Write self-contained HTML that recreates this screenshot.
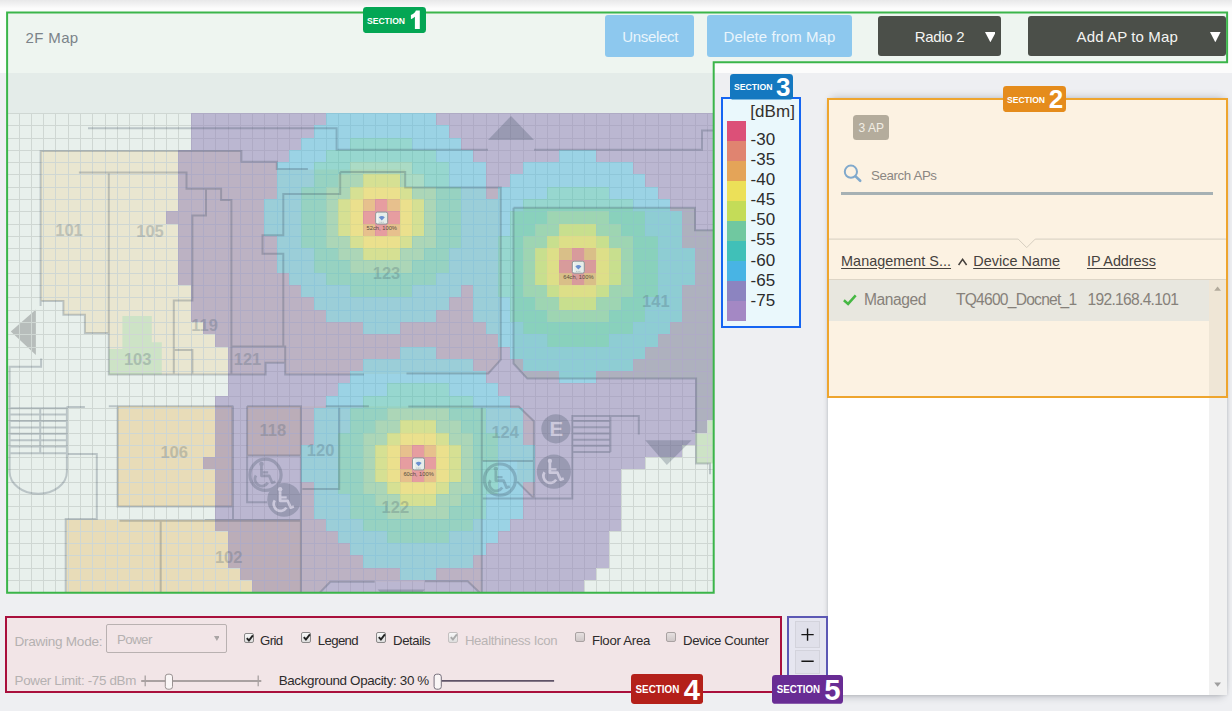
<!DOCTYPE html><html><head><meta charset="utf-8"><title>2F Map</title><style>
html,body{margin:0;padding:0}
body{width:1232px;height:711px;overflow:hidden;position:relative;background:#eeeff2;font-family:"Liberation Sans",sans-serif;}
.abs{position:absolute}
.slab{position:absolute;border-radius:3.5px;color:#fff;font-weight:bold;box-sizing:border-box;white-space:nowrap;line-height:1}
.slab .st{position:absolute;left:4.5px;top:50%;transform:translateY(-42%);letter-spacing:-0.1px}
.slab .sn{position:absolute;right:6px;top:50%;transform:translateY(-50%)}
.btn{position:absolute;color:#fff;font-size:16px;text-align:center;border-radius:3px;box-sizing:border-box}
.cb{position:absolute;width:10.3px;height:10.3px;border:1px solid #8a8a8a;border-radius:2px;background:linear-gradient(#f8f8f8,#dedede);box-sizing:border-box}
.cb svg{position:absolute;left:0;top:-1px}
.t{position:absolute;white-space:nowrap;line-height:1}
</style></head><body>
<div class="abs" style="left:0;top:0;width:1232px;height:73px;background:#fcfcfc"></div>
<div class="abs" style="left:0;top:0;width:1232px;height:8px;background:linear-gradient(#e8e8e9,#fbfbfb)"></div>
<div class="abs" style="left:7px;top:13px;width:1220px;height:49px;background:#eef5f0"></div>
<div class="abs" style="left:7px;top:62px;width:706px;height:11px;background:#eef5f0"></div>
<div class="t" style="left:25.50px;top:30.30px;font-size:15.00px;color:#7b8389;letter-spacing:0.370px;">2F Map</div>
<svg class="abs" style="left:7px;top:73px" width="706.5" height="519.5" viewBox="7 73 706.5 519.5" font-family="Liberation Sans, sans-serif">
<rect x="7" y="73" width="706.5" height="40" fill="#e4ece9"/>
<rect x="7" y="113" width="706.5" height="479.5" fill="#e8f0ec"/>
<path fill="#e9e6d0" d="M40.6 151.1H241.4V161.7H276.8V169.5H405.2V187.6H500.8V359.6L488.3 373.9H285.2V362.8H265.6V374.5H108.8V332.9H84.9V314.7H63.4V301.1H40.6Z"/>
<path fill="#e9e6d0" d="M300.9 406.3H519.5L533.9 420.6V497.9H481.8V592.5H479.5L467.7 581.5H330.4L320 592.5H300.9Z"/>
<path fill="#e8f0ec" d="M481.8 461H517.2V481.8L533.9 498.4H481.8Z"/>
<rect fill="#e8dcb8" x="117.6" y="406.3" width="114.8" height="100.2"/>
<rect fill="#e8dcb8" x="247.1" y="406.2" width="53.8" height="49.3"/>
<rect fill="#e8dcb8" x="66.5" y="519.6" width="234.4" height="73"/>
<path fill="#cde3c6" d="M122.4 315.9H151.8V342.2H161.8V374.5H108.8V348.9H122.4Z"/>
<path fill="#cde3c6" d="M513.5 207.7H695V230.2H713.5V463.5H696.1V378.6H527.3L513.5 363.5Z"/>
<path fill="#b7bdbb" d="M10.8 331.5L35.9 309.4V354.9Z"/>
<path d="M6.5 113.0V592.5M19.5 113.0V592.5M31.5 113.0V592.5M43.5 113.0V592.5M55.5 113.0V592.5M68.5 113.0V592.5M80.5 113.0V592.5M92.5 113.0V592.5M105.5 113.0V592.5M117.5 113.0V592.5M129.5 113.0V592.5M142.5 113.0V592.5M154.5 113.0V592.5M166.5 113.0V592.5M178.5 113.0V592.5M191.5 113.0V592.5M203.5 113.0V592.5M215.5 113.0V592.5M228.5 113.0V592.5M240.5 113.0V592.5M252.5 113.0V592.5M264.5 113.0V592.5M277.5 113.0V592.5M289.5 113.0V592.5M301.5 113.0V592.5M314.5 113.0V592.5M326.5 113.0V592.5M338.5 113.0V592.5M350.5 113.0V592.5M363.5 113.0V592.5M375.5 113.0V592.5M387.5 113.0V592.5M400.5 113.0V592.5M412.5 113.0V592.5M424.5 113.0V592.5M436.5 113.0V592.5M449.5 113.0V592.5M461.5 113.0V592.5M473.5 113.0V592.5M486.5 113.0V592.5M498.5 113.0V592.5M510.5 113.0V592.5M523.5 113.0V592.5M535.5 113.0V592.5M547.5 113.0V592.5M559.5 113.0V592.5M572.5 113.0V592.5M584.5 113.0V592.5M596.5 113.0V592.5M609.5 113.0V592.5M621.5 113.0V592.5M633.5 113.0V592.5M645.5 113.0V592.5M658.5 113.0V592.5M670.5 113.0V592.5M682.5 113.0V592.5M695.5 113.0V592.5M707.5 113.0V592.5M7.0 113.5H713.0M7.0 125.5H713.0M7.0 138.5H713.0M7.0 150.5H713.0M7.0 162.5H713.0M7.0 174.5H713.0M7.0 187.5H713.0M7.0 199.5H713.0M7.0 211.5H713.0M7.0 224.5H713.0M7.0 236.5H713.0M7.0 248.5H713.0M7.0 260.5H713.0M7.0 273.5H713.0M7.0 285.5H713.0M7.0 297.5H713.0M7.0 310.5H713.0M7.0 322.5H713.0M7.0 334.5H713.0M7.0 347.5H713.0M7.0 359.5H713.0M7.0 371.5H713.0M7.0 383.5H713.0M7.0 396.5H713.0M7.0 408.5H713.0M7.0 420.5H713.0M7.0 433.5H713.0M7.0 445.5H713.0M7.0 457.5H713.0M7.0 469.5H713.0M7.0 482.5H713.0M7.0 494.5H713.0M7.0 506.5H713.0M7.0 519.5H713.0M7.0 531.5H713.0M7.0 543.5H713.0M7.0 555.5H713.0M7.0 568.5H713.0M7.0 580.5H713.0" stroke="#cfd7d3" stroke-width="1" fill="none" shape-rendering="crispEdges"/>
<g opacity="0.50" shape-rendering="crispEdges">
<rect x="191.00" y="113.00" width="135.00" height="12.00" fill="#9080b8"/>
<rect x="326.00" y="113.00" width="110.00" height="12.00" fill="#50b8e0"/>
<rect x="436.00" y="113.00" width="277.00" height="12.00" fill="#9080b8"/>
<rect x="191.00" y="125.00" width="123.00" height="13.00" fill="#9080b8"/>
<rect x="314.00" y="125.00" width="135.00" height="13.00" fill="#50b8e0"/>
<rect x="449.00" y="125.00" width="264.00" height="13.00" fill="#9080b8"/>
<rect x="191.00" y="138.00" width="110.00" height="12.00" fill="#9080b8"/>
<rect x="301.00" y="138.00" width="49.00" height="12.00" fill="#50b8e0"/>
<rect x="350.00" y="138.00" width="62.00" height="12.00" fill="#48c0b4"/>
<rect x="412.00" y="138.00" width="49.00" height="12.00" fill="#50b8e0"/>
<rect x="461.00" y="138.00" width="252.00" height="12.00" fill="#9080b8"/>
<rect x="178.00" y="150.00" width="111.00" height="12.00" fill="#9080b8"/>
<rect x="289.00" y="150.00" width="37.00" height="12.00" fill="#50b8e0"/>
<rect x="326.00" y="150.00" width="110.00" height="12.00" fill="#48c0b4"/>
<rect x="436.00" y="150.00" width="37.00" height="12.00" fill="#50b8e0"/>
<rect x="473.00" y="150.00" width="86.00" height="12.00" fill="#9080b8"/>
<rect x="559.00" y="150.00" width="37.00" height="12.00" fill="#50b8e0"/>
<rect x="596.00" y="150.00" width="117.00" height="12.00" fill="#9080b8"/>
<rect x="178.00" y="162.00" width="99.00" height="12.00" fill="#9080b8"/>
<rect x="277.00" y="162.00" width="37.00" height="12.00" fill="#50b8e0"/>
<rect x="314.00" y="162.00" width="36.00" height="12.00" fill="#48c0b4"/>
<rect x="350.00" y="162.00" width="62.00" height="12.00" fill="#70c8a0"/>
<rect x="412.00" y="162.00" width="37.00" height="12.00" fill="#48c0b4"/>
<rect x="449.00" y="162.00" width="37.00" height="12.00" fill="#50b8e0"/>
<rect x="486.00" y="162.00" width="37.00" height="12.00" fill="#9080b8"/>
<rect x="523.00" y="162.00" width="110.00" height="12.00" fill="#50b8e0"/>
<rect x="633.00" y="162.00" width="80.00" height="12.00" fill="#9080b8"/>
<rect x="178.00" y="174.00" width="99.00" height="13.00" fill="#9080b8"/>
<rect x="277.00" y="174.00" width="37.00" height="13.00" fill="#50b8e0"/>
<rect x="314.00" y="174.00" width="24.00" height="13.00" fill="#48c0b4"/>
<rect x="338.00" y="174.00" width="25.00" height="13.00" fill="#70c8a0"/>
<rect x="363.00" y="174.00" width="37.00" height="13.00" fill="#c4dc58"/>
<rect x="400.00" y="174.00" width="24.00" height="13.00" fill="#70c8a0"/>
<rect x="424.00" y="174.00" width="25.00" height="13.00" fill="#48c0b4"/>
<rect x="449.00" y="174.00" width="37.00" height="13.00" fill="#50b8e0"/>
<rect x="486.00" y="174.00" width="24.00" height="13.00" fill="#9080b8"/>
<rect x="510.00" y="174.00" width="135.00" height="13.00" fill="#50b8e0"/>
<rect x="645.00" y="174.00" width="68.00" height="13.00" fill="#9080b8"/>
<rect x="178.00" y="187.00" width="99.00" height="12.00" fill="#9080b8"/>
<rect x="277.00" y="187.00" width="24.00" height="12.00" fill="#50b8e0"/>
<rect x="301.00" y="187.00" width="25.00" height="12.00" fill="#48c0b4"/>
<rect x="326.00" y="187.00" width="24.00" height="12.00" fill="#70c8a0"/>
<rect x="350.00" y="187.00" width="13.00" height="12.00" fill="#c4dc58"/>
<rect x="363.00" y="187.00" width="37.00" height="12.00" fill="#eedc4c"/>
<rect x="400.00" y="187.00" width="12.00" height="12.00" fill="#c4dc58"/>
<rect x="412.00" y="187.00" width="24.00" height="12.00" fill="#70c8a0"/>
<rect x="436.00" y="187.00" width="25.00" height="12.00" fill="#48c0b4"/>
<rect x="461.00" y="187.00" width="25.00" height="12.00" fill="#50b8e0"/>
<rect x="486.00" y="187.00" width="12.00" height="12.00" fill="#9080b8"/>
<rect x="498.00" y="187.00" width="49.00" height="12.00" fill="#50b8e0"/>
<rect x="547.00" y="187.00" width="62.00" height="12.00" fill="#48c0b4"/>
<rect x="609.00" y="187.00" width="49.00" height="12.00" fill="#50b8e0"/>
<rect x="658.00" y="187.00" width="55.00" height="12.00" fill="#9080b8"/>
<rect x="178.00" y="199.00" width="86.00" height="12.00" fill="#9080b8"/>
<rect x="264.00" y="199.00" width="37.00" height="12.00" fill="#50b8e0"/>
<rect x="301.00" y="199.00" width="25.00" height="12.00" fill="#48c0b4"/>
<rect x="326.00" y="199.00" width="12.00" height="12.00" fill="#70c8a0"/>
<rect x="338.00" y="199.00" width="12.00" height="12.00" fill="#c4dc58"/>
<rect x="350.00" y="199.00" width="13.00" height="12.00" fill="#eedc4c"/>
<rect x="363.00" y="199.00" width="12.00" height="12.00" fill="#e69c4c"/>
<rect x="375.00" y="199.00" width="12.00" height="12.00" fill="#e45672"/>
<rect x="387.00" y="199.00" width="13.00" height="12.00" fill="#e69c4c"/>
<rect x="400.00" y="199.00" width="12.00" height="12.00" fill="#eedc4c"/>
<rect x="412.00" y="199.00" width="12.00" height="12.00" fill="#c4dc58"/>
<rect x="424.00" y="199.00" width="12.00" height="12.00" fill="#70c8a0"/>
<rect x="436.00" y="199.00" width="25.00" height="12.00" fill="#48c0b4"/>
<rect x="461.00" y="199.00" width="62.00" height="12.00" fill="#50b8e0"/>
<rect x="523.00" y="199.00" width="110.00" height="12.00" fill="#48c0b4"/>
<rect x="633.00" y="199.00" width="37.00" height="12.00" fill="#50b8e0"/>
<rect x="670.00" y="199.00" width="43.00" height="12.00" fill="#9080b8"/>
<rect x="166.00" y="211.00" width="98.00" height="13.00" fill="#9080b8"/>
<rect x="264.00" y="211.00" width="37.00" height="13.00" fill="#50b8e0"/>
<rect x="301.00" y="211.00" width="25.00" height="13.00" fill="#48c0b4"/>
<rect x="326.00" y="211.00" width="12.00" height="13.00" fill="#70c8a0"/>
<rect x="338.00" y="211.00" width="12.00" height="13.00" fill="#c4dc58"/>
<rect x="350.00" y="211.00" width="13.00" height="13.00" fill="#eedc4c"/>
<rect x="363.00" y="211.00" width="37.00" height="13.00" fill="#e45672"/>
<rect x="400.00" y="211.00" width="12.00" height="13.00" fill="#eedc4c"/>
<rect x="412.00" y="211.00" width="12.00" height="13.00" fill="#c4dc58"/>
<rect x="424.00" y="211.00" width="12.00" height="13.00" fill="#70c8a0"/>
<rect x="436.00" y="211.00" width="25.00" height="13.00" fill="#48c0b4"/>
<rect x="461.00" y="211.00" width="49.00" height="13.00" fill="#50b8e0"/>
<rect x="510.00" y="211.00" width="37.00" height="13.00" fill="#48c0b4"/>
<rect x="547.00" y="211.00" width="62.00" height="13.00" fill="#70c8a0"/>
<rect x="609.00" y="211.00" width="36.00" height="13.00" fill="#48c0b4"/>
<rect x="645.00" y="211.00" width="37.00" height="13.00" fill="#50b8e0"/>
<rect x="682.00" y="211.00" width="31.00" height="13.00" fill="#9080b8"/>
<rect x="178.00" y="224.00" width="86.00" height="12.00" fill="#9080b8"/>
<rect x="264.00" y="224.00" width="37.00" height="12.00" fill="#50b8e0"/>
<rect x="301.00" y="224.00" width="25.00" height="12.00" fill="#48c0b4"/>
<rect x="326.00" y="224.00" width="12.00" height="12.00" fill="#70c8a0"/>
<rect x="338.00" y="224.00" width="12.00" height="12.00" fill="#c4dc58"/>
<rect x="350.00" y="224.00" width="13.00" height="12.00" fill="#eedc4c"/>
<rect x="363.00" y="224.00" width="12.00" height="12.00" fill="#e69c4c"/>
<rect x="375.00" y="224.00" width="12.00" height="12.00" fill="#e45672"/>
<rect x="387.00" y="224.00" width="13.00" height="12.00" fill="#e69c4c"/>
<rect x="400.00" y="224.00" width="12.00" height="12.00" fill="#eedc4c"/>
<rect x="412.00" y="224.00" width="12.00" height="12.00" fill="#c4dc58"/>
<rect x="424.00" y="224.00" width="12.00" height="12.00" fill="#70c8a0"/>
<rect x="436.00" y="224.00" width="25.00" height="12.00" fill="#48c0b4"/>
<rect x="461.00" y="224.00" width="49.00" height="12.00" fill="#50b8e0"/>
<rect x="510.00" y="224.00" width="25.00" height="12.00" fill="#48c0b4"/>
<rect x="535.00" y="224.00" width="24.00" height="12.00" fill="#70c8a0"/>
<rect x="559.00" y="224.00" width="37.00" height="12.00" fill="#c4dc58"/>
<rect x="596.00" y="224.00" width="25.00" height="12.00" fill="#70c8a0"/>
<rect x="621.00" y="224.00" width="24.00" height="12.00" fill="#48c0b4"/>
<rect x="645.00" y="224.00" width="37.00" height="12.00" fill="#50b8e0"/>
<rect x="682.00" y="224.00" width="31.00" height="12.00" fill="#9080b8"/>
<rect x="178.00" y="236.00" width="99.00" height="12.00" fill="#9080b8"/>
<rect x="277.00" y="236.00" width="24.00" height="12.00" fill="#50b8e0"/>
<rect x="301.00" y="236.00" width="25.00" height="12.00" fill="#48c0b4"/>
<rect x="326.00" y="236.00" width="24.00" height="12.00" fill="#70c8a0"/>
<rect x="350.00" y="236.00" width="13.00" height="12.00" fill="#c4dc58"/>
<rect x="363.00" y="236.00" width="37.00" height="12.00" fill="#eedc4c"/>
<rect x="400.00" y="236.00" width="12.00" height="12.00" fill="#c4dc58"/>
<rect x="412.00" y="236.00" width="24.00" height="12.00" fill="#70c8a0"/>
<rect x="436.00" y="236.00" width="25.00" height="12.00" fill="#48c0b4"/>
<rect x="461.00" y="236.00" width="37.00" height="12.00" fill="#50b8e0"/>
<rect x="498.00" y="236.00" width="25.00" height="12.00" fill="#48c0b4"/>
<rect x="523.00" y="236.00" width="24.00" height="12.00" fill="#70c8a0"/>
<rect x="547.00" y="236.00" width="12.00" height="12.00" fill="#c4dc58"/>
<rect x="559.00" y="236.00" width="37.00" height="12.00" fill="#eedc4c"/>
<rect x="596.00" y="236.00" width="13.00" height="12.00" fill="#c4dc58"/>
<rect x="609.00" y="236.00" width="24.00" height="12.00" fill="#70c8a0"/>
<rect x="633.00" y="236.00" width="25.00" height="12.00" fill="#48c0b4"/>
<rect x="658.00" y="236.00" width="24.00" height="12.00" fill="#50b8e0"/>
<rect x="682.00" y="236.00" width="31.00" height="12.00" fill="#9080b8"/>
<rect x="178.00" y="248.00" width="99.00" height="12.00" fill="#9080b8"/>
<rect x="277.00" y="248.00" width="37.00" height="12.00" fill="#50b8e0"/>
<rect x="314.00" y="248.00" width="24.00" height="12.00" fill="#48c0b4"/>
<rect x="338.00" y="248.00" width="25.00" height="12.00" fill="#70c8a0"/>
<rect x="363.00" y="248.00" width="37.00" height="12.00" fill="#c4dc58"/>
<rect x="400.00" y="248.00" width="24.00" height="12.00" fill="#70c8a0"/>
<rect x="424.00" y="248.00" width="25.00" height="12.00" fill="#48c0b4"/>
<rect x="449.00" y="248.00" width="49.00" height="12.00" fill="#50b8e0"/>
<rect x="498.00" y="248.00" width="25.00" height="12.00" fill="#48c0b4"/>
<rect x="523.00" y="248.00" width="12.00" height="12.00" fill="#70c8a0"/>
<rect x="535.00" y="248.00" width="12.00" height="12.00" fill="#c4dc58"/>
<rect x="547.00" y="248.00" width="12.00" height="12.00" fill="#eedc4c"/>
<rect x="559.00" y="248.00" width="13.00" height="12.00" fill="#e69c4c"/>
<rect x="572.00" y="248.00" width="12.00" height="12.00" fill="#e45672"/>
<rect x="584.00" y="248.00" width="12.00" height="12.00" fill="#e69c4c"/>
<rect x="596.00" y="248.00" width="13.00" height="12.00" fill="#eedc4c"/>
<rect x="609.00" y="248.00" width="12.00" height="12.00" fill="#c4dc58"/>
<rect x="621.00" y="248.00" width="12.00" height="12.00" fill="#70c8a0"/>
<rect x="633.00" y="248.00" width="25.00" height="12.00" fill="#48c0b4"/>
<rect x="658.00" y="248.00" width="37.00" height="12.00" fill="#50b8e0"/>
<rect x="695.00" y="248.00" width="18.00" height="12.00" fill="#9080b8"/>
<rect x="178.00" y="260.00" width="99.00" height="13.00" fill="#9080b8"/>
<rect x="277.00" y="260.00" width="37.00" height="13.00" fill="#50b8e0"/>
<rect x="314.00" y="260.00" width="36.00" height="13.00" fill="#48c0b4"/>
<rect x="350.00" y="260.00" width="62.00" height="13.00" fill="#70c8a0"/>
<rect x="412.00" y="260.00" width="37.00" height="13.00" fill="#48c0b4"/>
<rect x="449.00" y="260.00" width="49.00" height="13.00" fill="#50b8e0"/>
<rect x="498.00" y="260.00" width="25.00" height="13.00" fill="#48c0b4"/>
<rect x="523.00" y="260.00" width="12.00" height="13.00" fill="#70c8a0"/>
<rect x="535.00" y="260.00" width="12.00" height="13.00" fill="#c4dc58"/>
<rect x="547.00" y="260.00" width="12.00" height="13.00" fill="#eedc4c"/>
<rect x="559.00" y="260.00" width="37.00" height="13.00" fill="#e45672"/>
<rect x="596.00" y="260.00" width="13.00" height="13.00" fill="#eedc4c"/>
<rect x="609.00" y="260.00" width="12.00" height="13.00" fill="#c4dc58"/>
<rect x="621.00" y="260.00" width="12.00" height="13.00" fill="#70c8a0"/>
<rect x="633.00" y="260.00" width="25.00" height="13.00" fill="#48c0b4"/>
<rect x="658.00" y="260.00" width="37.00" height="13.00" fill="#50b8e0"/>
<rect x="695.00" y="260.00" width="18.00" height="13.00" fill="#9080b8"/>
<rect x="178.00" y="273.00" width="111.00" height="12.00" fill="#9080b8"/>
<rect x="289.00" y="273.00" width="37.00" height="12.00" fill="#50b8e0"/>
<rect x="326.00" y="273.00" width="110.00" height="12.00" fill="#48c0b4"/>
<rect x="436.00" y="273.00" width="62.00" height="12.00" fill="#50b8e0"/>
<rect x="498.00" y="273.00" width="25.00" height="12.00" fill="#48c0b4"/>
<rect x="523.00" y="273.00" width="12.00" height="12.00" fill="#70c8a0"/>
<rect x="535.00" y="273.00" width="12.00" height="12.00" fill="#c4dc58"/>
<rect x="547.00" y="273.00" width="12.00" height="12.00" fill="#eedc4c"/>
<rect x="559.00" y="273.00" width="13.00" height="12.00" fill="#e69c4c"/>
<rect x="572.00" y="273.00" width="12.00" height="12.00" fill="#e45672"/>
<rect x="584.00" y="273.00" width="12.00" height="12.00" fill="#e69c4c"/>
<rect x="596.00" y="273.00" width="13.00" height="12.00" fill="#eedc4c"/>
<rect x="609.00" y="273.00" width="12.00" height="12.00" fill="#c4dc58"/>
<rect x="621.00" y="273.00" width="12.00" height="12.00" fill="#70c8a0"/>
<rect x="633.00" y="273.00" width="25.00" height="12.00" fill="#48c0b4"/>
<rect x="658.00" y="273.00" width="37.00" height="12.00" fill="#50b8e0"/>
<rect x="695.00" y="273.00" width="18.00" height="12.00" fill="#9080b8"/>
<rect x="191.00" y="285.00" width="110.00" height="12.00" fill="#9080b8"/>
<rect x="301.00" y="285.00" width="49.00" height="12.00" fill="#50b8e0"/>
<rect x="350.00" y="285.00" width="62.00" height="12.00" fill="#48c0b4"/>
<rect x="412.00" y="285.00" width="49.00" height="12.00" fill="#50b8e0"/>
<rect x="461.00" y="285.00" width="12.00" height="12.00" fill="#9080b8"/>
<rect x="473.00" y="285.00" width="25.00" height="12.00" fill="#50b8e0"/>
<rect x="498.00" y="285.00" width="25.00" height="12.00" fill="#48c0b4"/>
<rect x="523.00" y="285.00" width="24.00" height="12.00" fill="#70c8a0"/>
<rect x="547.00" y="285.00" width="12.00" height="12.00" fill="#c4dc58"/>
<rect x="559.00" y="285.00" width="37.00" height="12.00" fill="#eedc4c"/>
<rect x="596.00" y="285.00" width="13.00" height="12.00" fill="#c4dc58"/>
<rect x="609.00" y="285.00" width="24.00" height="12.00" fill="#70c8a0"/>
<rect x="633.00" y="285.00" width="25.00" height="12.00" fill="#48c0b4"/>
<rect x="658.00" y="285.00" width="24.00" height="12.00" fill="#50b8e0"/>
<rect x="682.00" y="285.00" width="31.00" height="12.00" fill="#9080b8"/>
<rect x="191.00" y="297.00" width="123.00" height="13.00" fill="#9080b8"/>
<rect x="314.00" y="297.00" width="135.00" height="13.00" fill="#50b8e0"/>
<rect x="449.00" y="297.00" width="24.00" height="13.00" fill="#9080b8"/>
<rect x="473.00" y="297.00" width="37.00" height="13.00" fill="#50b8e0"/>
<rect x="510.00" y="297.00" width="25.00" height="13.00" fill="#48c0b4"/>
<rect x="535.00" y="297.00" width="24.00" height="13.00" fill="#70c8a0"/>
<rect x="559.00" y="297.00" width="37.00" height="13.00" fill="#c4dc58"/>
<rect x="596.00" y="297.00" width="25.00" height="13.00" fill="#70c8a0"/>
<rect x="621.00" y="297.00" width="24.00" height="13.00" fill="#48c0b4"/>
<rect x="645.00" y="297.00" width="37.00" height="13.00" fill="#50b8e0"/>
<rect x="682.00" y="297.00" width="31.00" height="13.00" fill="#9080b8"/>
<rect x="191.00" y="310.00" width="135.00" height="12.00" fill="#9080b8"/>
<rect x="326.00" y="310.00" width="110.00" height="12.00" fill="#50b8e0"/>
<rect x="436.00" y="310.00" width="37.00" height="12.00" fill="#9080b8"/>
<rect x="473.00" y="310.00" width="37.00" height="12.00" fill="#50b8e0"/>
<rect x="510.00" y="310.00" width="37.00" height="12.00" fill="#48c0b4"/>
<rect x="547.00" y="310.00" width="62.00" height="12.00" fill="#70c8a0"/>
<rect x="609.00" y="310.00" width="36.00" height="12.00" fill="#48c0b4"/>
<rect x="645.00" y="310.00" width="37.00" height="12.00" fill="#50b8e0"/>
<rect x="682.00" y="310.00" width="31.00" height="12.00" fill="#9080b8"/>
<rect x="203.00" y="322.00" width="160.00" height="12.00" fill="#9080b8"/>
<rect x="363.00" y="322.00" width="37.00" height="12.00" fill="#50b8e0"/>
<rect x="400.00" y="322.00" width="86.00" height="12.00" fill="#9080b8"/>
<rect x="486.00" y="322.00" width="37.00" height="12.00" fill="#50b8e0"/>
<rect x="523.00" y="322.00" width="110.00" height="12.00" fill="#48c0b4"/>
<rect x="633.00" y="322.00" width="37.00" height="12.00" fill="#50b8e0"/>
<rect x="670.00" y="322.00" width="43.00" height="12.00" fill="#9080b8"/>
<rect x="215.00" y="334.00" width="283.00" height="13.00" fill="#9080b8"/>
<rect x="498.00" y="334.00" width="49.00" height="13.00" fill="#50b8e0"/>
<rect x="547.00" y="334.00" width="62.00" height="13.00" fill="#48c0b4"/>
<rect x="609.00" y="334.00" width="49.00" height="13.00" fill="#50b8e0"/>
<rect x="658.00" y="334.00" width="55.00" height="13.00" fill="#9080b8"/>
<rect x="228.00" y="347.00" width="172.00" height="12.00" fill="#9080b8"/>
<rect x="400.00" y="347.00" width="36.00" height="12.00" fill="#50b8e0"/>
<rect x="436.00" y="347.00" width="74.00" height="12.00" fill="#9080b8"/>
<rect x="510.00" y="347.00" width="135.00" height="12.00" fill="#50b8e0"/>
<rect x="645.00" y="347.00" width="68.00" height="12.00" fill="#9080b8"/>
<rect x="228.00" y="359.00" width="135.00" height="12.00" fill="#9080b8"/>
<rect x="363.00" y="359.00" width="110.00" height="12.00" fill="#50b8e0"/>
<rect x="473.00" y="359.00" width="50.00" height="12.00" fill="#9080b8"/>
<rect x="523.00" y="359.00" width="110.00" height="12.00" fill="#50b8e0"/>
<rect x="633.00" y="359.00" width="80.00" height="12.00" fill="#9080b8"/>
<rect x="228.00" y="371.00" width="122.00" height="12.00" fill="#9080b8"/>
<rect x="350.00" y="371.00" width="136.00" height="12.00" fill="#50b8e0"/>
<rect x="486.00" y="371.00" width="73.00" height="12.00" fill="#9080b8"/>
<rect x="559.00" y="371.00" width="37.00" height="12.00" fill="#50b8e0"/>
<rect x="596.00" y="371.00" width="117.00" height="12.00" fill="#9080b8"/>
<rect x="228.00" y="383.00" width="110.00" height="13.00" fill="#9080b8"/>
<rect x="338.00" y="383.00" width="49.00" height="13.00" fill="#50b8e0"/>
<rect x="387.00" y="383.00" width="62.00" height="13.00" fill="#48c0b4"/>
<rect x="449.00" y="383.00" width="49.00" height="13.00" fill="#50b8e0"/>
<rect x="498.00" y="383.00" width="215.00" height="13.00" fill="#9080b8"/>
<rect x="215.00" y="396.00" width="111.00" height="12.00" fill="#9080b8"/>
<rect x="326.00" y="396.00" width="37.00" height="12.00" fill="#50b8e0"/>
<rect x="363.00" y="396.00" width="110.00" height="12.00" fill="#48c0b4"/>
<rect x="473.00" y="396.00" width="37.00" height="12.00" fill="#50b8e0"/>
<rect x="510.00" y="396.00" width="203.00" height="12.00" fill="#9080b8"/>
<rect x="215.00" y="408.00" width="99.00" height="12.00" fill="#9080b8"/>
<rect x="314.00" y="408.00" width="36.00" height="12.00" fill="#50b8e0"/>
<rect x="350.00" y="408.00" width="37.00" height="12.00" fill="#48c0b4"/>
<rect x="387.00" y="408.00" width="62.00" height="12.00" fill="#70c8a0"/>
<rect x="449.00" y="408.00" width="37.00" height="12.00" fill="#48c0b4"/>
<rect x="486.00" y="408.00" width="37.00" height="12.00" fill="#50b8e0"/>
<rect x="523.00" y="408.00" width="190.00" height="12.00" fill="#9080b8"/>
<rect x="215.00" y="420.00" width="99.00" height="13.00" fill="#9080b8"/>
<rect x="314.00" y="420.00" width="36.00" height="13.00" fill="#50b8e0"/>
<rect x="350.00" y="420.00" width="25.00" height="13.00" fill="#48c0b4"/>
<rect x="375.00" y="420.00" width="25.00" height="13.00" fill="#70c8a0"/>
<rect x="400.00" y="420.00" width="36.00" height="13.00" fill="#c4dc58"/>
<rect x="436.00" y="420.00" width="25.00" height="13.00" fill="#70c8a0"/>
<rect x="461.00" y="420.00" width="25.00" height="13.00" fill="#48c0b4"/>
<rect x="486.00" y="420.00" width="37.00" height="13.00" fill="#50b8e0"/>
<rect x="523.00" y="420.00" width="184.00" height="13.00" fill="#9080b8"/>
<rect x="215.00" y="433.00" width="99.00" height="12.00" fill="#9080b8"/>
<rect x="314.00" y="433.00" width="24.00" height="12.00" fill="#50b8e0"/>
<rect x="338.00" y="433.00" width="25.00" height="12.00" fill="#48c0b4"/>
<rect x="363.00" y="433.00" width="24.00" height="12.00" fill="#70c8a0"/>
<rect x="387.00" y="433.00" width="13.00" height="12.00" fill="#c4dc58"/>
<rect x="400.00" y="433.00" width="36.00" height="12.00" fill="#eedc4c"/>
<rect x="436.00" y="433.00" width="13.00" height="12.00" fill="#c4dc58"/>
<rect x="449.00" y="433.00" width="24.00" height="12.00" fill="#70c8a0"/>
<rect x="473.00" y="433.00" width="25.00" height="12.00" fill="#48c0b4"/>
<rect x="498.00" y="433.00" width="25.00" height="12.00" fill="#50b8e0"/>
<rect x="523.00" y="433.00" width="172.00" height="12.00" fill="#9080b8"/>
<rect x="215.00" y="445.00" width="86.00" height="12.00" fill="#9080b8"/>
<rect x="301.00" y="445.00" width="37.00" height="12.00" fill="#50b8e0"/>
<rect x="338.00" y="445.00" width="25.00" height="12.00" fill="#48c0b4"/>
<rect x="363.00" y="445.00" width="12.00" height="12.00" fill="#70c8a0"/>
<rect x="375.00" y="445.00" width="12.00" height="12.00" fill="#c4dc58"/>
<rect x="387.00" y="445.00" width="13.00" height="12.00" fill="#eedc4c"/>
<rect x="400.00" y="445.00" width="12.00" height="12.00" fill="#e69c4c"/>
<rect x="412.00" y="445.00" width="12.00" height="12.00" fill="#e45672"/>
<rect x="424.00" y="445.00" width="12.00" height="12.00" fill="#e69c4c"/>
<rect x="436.00" y="445.00" width="13.00" height="12.00" fill="#eedc4c"/>
<rect x="449.00" y="445.00" width="12.00" height="12.00" fill="#c4dc58"/>
<rect x="461.00" y="445.00" width="12.00" height="12.00" fill="#70c8a0"/>
<rect x="473.00" y="445.00" width="25.00" height="12.00" fill="#48c0b4"/>
<rect x="498.00" y="445.00" width="37.00" height="12.00" fill="#50b8e0"/>
<rect x="535.00" y="445.00" width="147.00" height="12.00" fill="#9080b8"/>
<rect x="203.00" y="457.00" width="98.00" height="12.00" fill="#9080b8"/>
<rect x="301.00" y="457.00" width="37.00" height="12.00" fill="#50b8e0"/>
<rect x="338.00" y="457.00" width="25.00" height="12.00" fill="#48c0b4"/>
<rect x="363.00" y="457.00" width="12.00" height="12.00" fill="#70c8a0"/>
<rect x="375.00" y="457.00" width="12.00" height="12.00" fill="#c4dc58"/>
<rect x="387.00" y="457.00" width="13.00" height="12.00" fill="#eedc4c"/>
<rect x="400.00" y="457.00" width="36.00" height="12.00" fill="#e45672"/>
<rect x="436.00" y="457.00" width="13.00" height="12.00" fill="#eedc4c"/>
<rect x="449.00" y="457.00" width="12.00" height="12.00" fill="#c4dc58"/>
<rect x="461.00" y="457.00" width="12.00" height="12.00" fill="#70c8a0"/>
<rect x="473.00" y="457.00" width="25.00" height="12.00" fill="#48c0b4"/>
<rect x="498.00" y="457.00" width="37.00" height="12.00" fill="#50b8e0"/>
<rect x="535.00" y="457.00" width="110.00" height="12.00" fill="#9080b8"/>
<rect x="215.00" y="469.00" width="86.00" height="13.00" fill="#9080b8"/>
<rect x="301.00" y="469.00" width="37.00" height="13.00" fill="#50b8e0"/>
<rect x="338.00" y="469.00" width="25.00" height="13.00" fill="#48c0b4"/>
<rect x="363.00" y="469.00" width="12.00" height="13.00" fill="#70c8a0"/>
<rect x="375.00" y="469.00" width="12.00" height="13.00" fill="#c4dc58"/>
<rect x="387.00" y="469.00" width="13.00" height="13.00" fill="#eedc4c"/>
<rect x="400.00" y="469.00" width="12.00" height="13.00" fill="#e69c4c"/>
<rect x="412.00" y="469.00" width="12.00" height="13.00" fill="#e45672"/>
<rect x="424.00" y="469.00" width="12.00" height="13.00" fill="#e69c4c"/>
<rect x="436.00" y="469.00" width="13.00" height="13.00" fill="#eedc4c"/>
<rect x="449.00" y="469.00" width="12.00" height="13.00" fill="#c4dc58"/>
<rect x="461.00" y="469.00" width="12.00" height="13.00" fill="#70c8a0"/>
<rect x="473.00" y="469.00" width="25.00" height="13.00" fill="#48c0b4"/>
<rect x="498.00" y="469.00" width="37.00" height="13.00" fill="#50b8e0"/>
<rect x="535.00" y="469.00" width="86.00" height="13.00" fill="#9080b8"/>
<rect x="215.00" y="482.00" width="99.00" height="12.00" fill="#9080b8"/>
<rect x="314.00" y="482.00" width="24.00" height="12.00" fill="#50b8e0"/>
<rect x="338.00" y="482.00" width="25.00" height="12.00" fill="#48c0b4"/>
<rect x="363.00" y="482.00" width="24.00" height="12.00" fill="#70c8a0"/>
<rect x="387.00" y="482.00" width="13.00" height="12.00" fill="#c4dc58"/>
<rect x="400.00" y="482.00" width="36.00" height="12.00" fill="#eedc4c"/>
<rect x="436.00" y="482.00" width="13.00" height="12.00" fill="#c4dc58"/>
<rect x="449.00" y="482.00" width="24.00" height="12.00" fill="#70c8a0"/>
<rect x="473.00" y="482.00" width="25.00" height="12.00" fill="#48c0b4"/>
<rect x="498.00" y="482.00" width="25.00" height="12.00" fill="#50b8e0"/>
<rect x="523.00" y="482.00" width="98.00" height="12.00" fill="#9080b8"/>
<rect x="215.00" y="494.00" width="99.00" height="12.00" fill="#9080b8"/>
<rect x="314.00" y="494.00" width="36.00" height="12.00" fill="#50b8e0"/>
<rect x="350.00" y="494.00" width="25.00" height="12.00" fill="#48c0b4"/>
<rect x="375.00" y="494.00" width="25.00" height="12.00" fill="#70c8a0"/>
<rect x="400.00" y="494.00" width="36.00" height="12.00" fill="#c4dc58"/>
<rect x="436.00" y="494.00" width="25.00" height="12.00" fill="#70c8a0"/>
<rect x="461.00" y="494.00" width="25.00" height="12.00" fill="#48c0b4"/>
<rect x="486.00" y="494.00" width="37.00" height="12.00" fill="#50b8e0"/>
<rect x="523.00" y="494.00" width="98.00" height="12.00" fill="#9080b8"/>
<rect x="215.00" y="506.00" width="99.00" height="13.00" fill="#9080b8"/>
<rect x="314.00" y="506.00" width="36.00" height="13.00" fill="#50b8e0"/>
<rect x="350.00" y="506.00" width="37.00" height="13.00" fill="#48c0b4"/>
<rect x="387.00" y="506.00" width="62.00" height="13.00" fill="#70c8a0"/>
<rect x="449.00" y="506.00" width="37.00" height="13.00" fill="#48c0b4"/>
<rect x="486.00" y="506.00" width="37.00" height="13.00" fill="#50b8e0"/>
<rect x="523.00" y="506.00" width="98.00" height="13.00" fill="#9080b8"/>
<rect x="215.00" y="519.00" width="111.00" height="12.00" fill="#9080b8"/>
<rect x="326.00" y="519.00" width="37.00" height="12.00" fill="#50b8e0"/>
<rect x="363.00" y="519.00" width="110.00" height="12.00" fill="#48c0b4"/>
<rect x="473.00" y="519.00" width="37.00" height="12.00" fill="#50b8e0"/>
<rect x="510.00" y="519.00" width="111.00" height="12.00" fill="#9080b8"/>
<rect x="228.00" y="531.00" width="110.00" height="12.00" fill="#9080b8"/>
<rect x="338.00" y="531.00" width="49.00" height="12.00" fill="#50b8e0"/>
<rect x="387.00" y="531.00" width="62.00" height="12.00" fill="#48c0b4"/>
<rect x="449.00" y="531.00" width="49.00" height="12.00" fill="#50b8e0"/>
<rect x="498.00" y="531.00" width="111.00" height="12.00" fill="#9080b8"/>
<rect x="228.00" y="543.00" width="122.00" height="12.00" fill="#9080b8"/>
<rect x="350.00" y="543.00" width="136.00" height="12.00" fill="#50b8e0"/>
<rect x="486.00" y="543.00" width="123.00" height="12.00" fill="#9080b8"/>
<rect x="228.00" y="555.00" width="135.00" height="13.00" fill="#9080b8"/>
<rect x="363.00" y="555.00" width="110.00" height="13.00" fill="#50b8e0"/>
<rect x="473.00" y="555.00" width="136.00" height="13.00" fill="#9080b8"/>
<rect x="240.00" y="568.00" width="160.00" height="12.00" fill="#9080b8"/>
<rect x="400.00" y="568.00" width="36.00" height="12.00" fill="#50b8e0"/>
<rect x="436.00" y="568.00" width="160.00" height="12.00" fill="#9080b8"/>
<rect x="252.00" y="580.00" width="332.00" height="12.00" fill="#9080b8"/>
</g>
<g opacity="0.25"><path fill="none" stroke="#36465a" stroke-width="2" d="M88 128.2H336.6V149.7H488 M534 149.7H702V130.5H713.5 M40.6 305.9V151.1H241.4V161.7H276.8V169.1H307.9 M78.9 172.4H186.5V188.7H221.1V200.1H231.4V374.5 M108.8 172.4V374.5H231.4 M206 188.7V215.4H192.4V300.4H173.8V374.5 M173.8 350.1H192.4V374.5 M40.6 301.1H63.4V314.7H84.9V332.9H108.8 M41.1 358.5V366.8H9.6V471.8A28.65 22 0 0 0 66.9 471.8V407 M66.5 407H84.9 M9.6 408.2H66.9 M9.6 414.6H66.9 M9.6 421.0H66.9 M9.6 427.4H66.9 M9.6 433.8H66.9 M9.6 440.2H66.9 M9.6 446.6H66.9 M9.6 453.2H66.9 M40.2 408.2V453.2 M66.9 453.9H96.8V518.9H65.7V592.5 M108.8 406.3H232.4V506.5H117.6V406.3 M119.5 520.8H300.9 M160.7 520.8V592.5 M340.2 171.9H405.2V187.5H500.8V359.6L488.3 373.4H406.5 M340.2 171.9V193.9H283.3V235.3H262.5V253.7H283.3V346.5 M231.4 346.5H285.2V362.8H265.6V374.5H231.4 M285.2 362.8V374.5H364 M513.5 207.7H695V230.2H713.5 M513.5 207.7V363.5L527.3 378.6H696.1V431H691.6 M696.1 431V463.5H710V474.3 M247.1 406.2H300.9V592.5 M247.1 406.2V502.2H267 M247.1 455.5H300.9 M233 406.2V519.9 M205 519.9H300.9 M325.8 406.3H368.9 M408.3 406.6H518.7L533.9 421.2V498.4 M517.2 481.8L533.9 498.4 M339.2 407.7V488.9H302.3 M481.8 407.7V592.5 M481.8 461.1H533.9 M481.8 498.4H572.3V416.1H638.8V434.5 M610.4 416.1V452 M572.3 421.0H610.4 M572.3 427.2H610.4 M572.3 433.4H610.4 M572.3 439.7H610.4 M572.3 445.8H610.4 M572.3 452.0H610.4 M320 592.5L330.4 581.7H374.7 M424.9 581.3H467.7L479.5 592.5"/>
<path fill="#36465a" d="M488 140H534L511 116Z"/>
<path fill="#36465a" d="M645.2 440.3H691.6L666.8 465.1Z"/>
<path fill="#36465a" d="M377.6 589.6H424.9L422 592.5H380.5Z"/>
<text x="69.0" y="235.5" text-anchor="middle" font-size="16.5" font-weight="bold" fill="#42586a">101</text>
<text x="150.0" y="236.5" text-anchor="middle" font-size="16.5" font-weight="bold" fill="#42586a">105</text>
<text x="137.7" y="365.4" text-anchor="middle" font-size="16.5" font-weight="bold" fill="#42586a">103</text>
<text x="204.5" y="330.6" text-anchor="middle" font-size="16.5" font-weight="bold" fill="#42586a">119</text>
<text x="247.5" y="365.4" text-anchor="middle" font-size="16.5" font-weight="bold" fill="#42586a">121</text>
<text x="386.5" y="279.0" text-anchor="middle" font-size="16.5" font-weight="bold" fill="#42586a">123</text>
<text x="655.8" y="306.5" text-anchor="middle" font-size="16.5" font-weight="bold" fill="#42586a">141</text>
<text x="174.2" y="457.5" text-anchor="middle" font-size="16.5" font-weight="bold" fill="#42586a">106</text>
<text x="228.7" y="562.8" text-anchor="middle" font-size="16.5" font-weight="bold" fill="#42586a">102</text>
<text x="272.8" y="435.9" text-anchor="middle" font-size="16.5" font-weight="bold" fill="#42586a">118</text>
<text x="320.6" y="455.8" text-anchor="middle" font-size="16.5" font-weight="bold" fill="#42586a">120</text>
<text x="395.3" y="513.4" text-anchor="middle" font-size="16.5" font-weight="bold" fill="#42586a">122</text>
<text x="505.2" y="438.4" text-anchor="middle" font-size="16.5" font-weight="bold" fill="#42586a">124</text>
<circle cx="265.5" cy="474.8" r="15.6" fill="none" stroke="#36465a" stroke-width="3.2"/><g transform="translate(265.5 474.8) scale(1.012)" fill="none" stroke="#36465a" stroke-width="2.7" stroke-linejoin="round"><circle cx="-4" cy="-10.6" r="2.2" fill="#36465a" stroke="none"/><path d="M-4 -8.6V1H3.6L6.6 7.9L9.8 6.8"/><path d="M-4 -2.4H2.6" stroke-width="2.2"/><path d="M-9.4 0.6A6.6 6.6 0 1 0 2.3 7.9"/></g>
<circle cx="284.1" cy="499.8" r="16.9" fill="#36465a"/><g transform="translate(284.1 499.8) scale(0.994)" fill="none" stroke="#ffffff" stroke-width="2.7" stroke-linejoin="round"><circle cx="-4" cy="-10.6" r="2.2" fill="#ffffff" stroke="none"/><path d="M-4 -8.6V1H3.6L6.6 7.9L9.8 6.8"/><path d="M-4 -2.4H2.6" stroke-width="2.2"/><path d="M-9.4 0.6A6.6 6.6 0 1 0 2.3 7.9"/></g>
<circle cx="499.9" cy="479.6" r="15.6" fill="none" stroke="#36465a" stroke-width="3.2"/><g transform="translate(499.9 479.6) scale(1.012)" fill="none" stroke="#36465a" stroke-width="2.7" stroke-linejoin="round"><circle cx="-4" cy="-10.6" r="2.2" fill="#36465a" stroke="none"/><path d="M-4 -8.6V1H3.6L6.6 7.9L9.8 6.8"/><path d="M-4 -2.4H2.6" stroke-width="2.2"/><path d="M-9.4 0.6A6.6 6.6 0 1 0 2.3 7.9"/></g>
<circle cx="553.9" cy="471.7" r="17.1" fill="#36465a"/><g transform="translate(553.9 471.7) scale(1.006)" fill="none" stroke="#ffffff" stroke-width="2.7" stroke-linejoin="round"><circle cx="-4" cy="-10.6" r="2.2" fill="#ffffff" stroke="none"/><path d="M-4 -8.6V1H3.6L6.6 7.9L9.8 6.8"/><path d="M-4 -2.4H2.6" stroke-width="2.2"/><path d="M-9.4 0.6A6.6 6.6 0 1 0 2.3 7.9"/></g>
<circle cx="555.9" cy="428.8" r="14.6" fill="#36465a"/><text x="556.2" y="436" text-anchor="middle" font-size="20.3" font-weight="bold" fill="#ffffff">E</text></g>
<rect x="375.7" y="212.1" width="12" height="12" rx="1.8" fill="#e6edea" stroke="#8e9797" stroke-width="1"/>
<path d="M377.1 213.4V222.8" stroke="#f6f9f8" stroke-width="1.2"/>
<path d="M381.8 220.4l3 -3.1a4.6 4.6 0 0 0 -6 0z" fill="#6a90d0"/>
<path d="M379.5 222.3h4.6" stroke="#a4aeb2" stroke-width="0.8" stroke-dasharray="1 0.6"/>
<text x="366.6" y="230.2" font-size="5.9" textLength="30.4" lengthAdjust="spacingAndGlyphs" fill="#574c40">52ch, 100%</text>
<rect x="572.3" y="261.2" width="12" height="12" rx="1.8" fill="#e6edea" stroke="#8e9797" stroke-width="1"/>
<path d="M573.7 262.5V271.9" stroke="#f6f9f8" stroke-width="1.2"/>
<path d="M578.4 269.5l3 -3.1a4.6 4.6 0 0 0 -6 0z" fill="#6a90d0"/>
<path d="M576.1 271.4h4.6" stroke="#a4aeb2" stroke-width="0.8" stroke-dasharray="1 0.6"/>
<text x="563.2" y="279.3" font-size="5.9" textLength="30.4" lengthAdjust="spacingAndGlyphs" fill="#574c40">64ch, 100%</text>
<rect x="412.5" y="457.9" width="12" height="12" rx="1.8" fill="#e6edea" stroke="#8e9797" stroke-width="1"/>
<path d="M413.9 459.2V468.6" stroke="#f6f9f8" stroke-width="1.2"/>
<path d="M418.6 466.2l3 -3.1a4.6 4.6 0 0 0 -6 0z" fill="#6a90d0"/>
<path d="M416.3 468.1h4.6" stroke="#a4aeb2" stroke-width="0.8" stroke-dasharray="1 0.6"/>
<text x="403.4" y="476.0" font-size="5.9" textLength="30.4" lengthAdjust="spacingAndGlyphs" fill="#574c40">60ch, 100%</text>
</svg>
<div class="btn" style="left:605px;top:15.3px;width:89px;height:41.6px;background:#8dc8ee"></div>
<div class="t" style="left:622.20px;top:29.40px;font-size:15.00px;color:#e9f5fc;letter-spacing:-0.293px;">Unselect</div>
<div class="btn" style="left:707px;top:15.3px;width:145.2px;height:41.6px;background:#8dc8ee"></div>
<div class="t" style="left:723.50px;top:29.40px;font-size:15.00px;color:#e9f5fc;letter-spacing:0.068px;">Delete from Map</div>
<div class="btn" style="left:878.2px;top:16.4px;width:122.6px;height:39.2px;background:#4b4f49"></div>
<div class="t" style="left:914.70px;top:29.00px;font-size:15.00px;color:#f4f4f2;letter-spacing:-0.308px;">Radio 2</div>
<svg class="abs" style="left:984.6px;top:32.0px" width="10.9" height="10.3" viewBox="0 0 10.9 10.3"><path d="M0 0H10.9L5.4 10.3Z" fill="#fff"/></svg>
<div class="btn" style="left:1028.1px;top:16.4px;width:198.1px;height:39.2px;background:#4b4f49"></div>
<div class="t" style="left:1076.60px;top:29.00px;font-size:15.00px;color:#f4f4f2;letter-spacing:0.113px;">Add AP to Map</div>
<svg class="abs" style="left:1210.0px;top:32.0px" width="10.6" height="10.3" viewBox="0 0 10.6 10.3"><path d="M0 0H10.6L5.3 10.3Z" fill="#fff"/></svg>
<div class="abs" style="left:828px;top:99px;width:399px;height:596px;background:#fff;box-shadow:0 5px 8px -4px rgba(20,25,40,0.28),0 -5px 8px -4px rgba(20,25,40,0.24),0 0 3px rgba(20,25,40,0.12)"></div>
<div class="abs" style="left:1209px;top:396px;width:18px;height:299px;background:#f1f1f1"></div>
<div class="abs" style="left:828px;top:99px;width:399px;height:297px;background:#fcf2e2"></div>
<div class="abs" style="left:1209px;top:279.5px;width:18px;height:116.5px;background:#efe6d6"></div>
<div class="abs" style="left:828px;top:279.6px;width:381px;height:41.5px;background:#e8e7df"></div>
<div class="abs" style="left:853.2px;top:115.1px;width:35.7px;height:24.6px;background:#b4ac9c;border-radius:3.5px"></div>
<div class="t" style="left:858.50px;top:121.64px;font-size:12.00px;color:#f2eee4;letter-spacing:0.060px;">3 AP</div>
<svg class="abs" style="left:841px;top:162px" width="24" height="24" viewBox="841 162 24 24"><circle cx="850.9" cy="171.7" r="6.1" fill="none" stroke="#80a9cc" stroke-width="2"/><path d="M855.6 176.4l4.6 4.4" stroke="#80a9cc" stroke-width="2.6" stroke-linecap="round"/></svg>
<div class="t" style="left:871.00px;top:168.74px;font-size:13.30px;color:#8b8782;letter-spacing:-0.384px;">Search APs</div>
<div class="abs" style="left:841px;top:192.4px;width:372px;height:2.2px;background:#a6b1b4"></div>
<svg class="abs" style="left:828px;top:236px" width="399" height="14" viewBox="0 0 399 14"><path d="M0 3.1H190.2L198.7 11.6L207.2 3.1H399" fill="none" stroke="#d6cec0" stroke-width="1"/></svg>
<div class="t" style="left:841.10px;top:253.51px;font-size:14.40px;color:#45413d;letter-spacing:0.023px;text-decoration:underline;text-underline-offset:1.5px">Management S...</div>
<svg class="abs" style="left:957px;top:256px" width="11" height="11" viewBox="0 0 11 11"><path d="M1.6 9L5.6 3.2L9.6 9" fill="none" stroke="#45413d" stroke-width="1.5"/></svg>
<div class="t" style="left:973.20px;top:253.51px;font-size:14.40px;color:#45413d;letter-spacing:0.050px;text-decoration:underline;text-underline-offset:1.5px">Device Name</div>
<div class="t" style="left:1087.00px;top:253.51px;font-size:14.40px;color:#45413d;letter-spacing:-0.056px;text-decoration:underline;text-underline-offset:1.5px">IP Address</div>
<div class="abs" style="left:828px;top:278.7px;width:399px;height:1px;background:#ddd5c6"></div>
<svg class="abs" style="left:842px;top:292px" width="16" height="15" viewBox="842 292 16 15"><path d="M843.9 300.2l4.2 3.7 7.6-8.6" fill="none" stroke="#46b843" stroke-width="2.5"/></svg>
<div class="t" style="left:864.10px;top:292.09px;font-size:15.60px;color:#86817a;letter-spacing:-0.459px;">Managed</div>
<div class="t" style="left:955.90px;top:292.09px;font-size:15.60px;color:#86817a;letter-spacing:-0.751px;">TQ4600_Docnet_1</div>
<div class="t" style="left:1087.60px;top:292.09px;font-size:15.60px;color:#86817a;letter-spacing:-0.707px;">192.168.4.101</div>
<svg class="abs" style="left:1213px;top:285px" width="10" height="8" viewBox="0 0 10 8"><path d="M1.2 5.8L4.6 1.6L8 5.8Z" fill="#b2aa9b"/></svg>
<svg class="abs" style="left:1213px;top:681px" width="10" height="8" viewBox="0 0 10 8"><path d="M1.2 1.6L4.6 5.8L8 1.6Z" fill="#9e9e9e"/></svg>
<div class="abs" style="left:827px;top:98px;width:397.2px;height:295.5px;border:2px solid #eea52e"></div>
<div class="abs" style="left:721.2px;top:97px;width:75.6px;height:226.6px;border:2.1px solid #1565f2;background:#eaf8fc"></div>
<div class="abs" style="left:726.6px;top:121.3px;width:19.5px;height:20.1px;background:#dc5078"></div>
<div class="abs" style="left:726.6px;top:141.3px;width:19.5px;height:20.1px;background:#e08470"></div>
<div class="abs" style="left:726.6px;top:161.3px;width:19.5px;height:20.1px;background:#e4a458"></div>
<div class="abs" style="left:726.6px;top:181.3px;width:19.5px;height:20.1px;background:#ece058"></div>
<div class="abs" style="left:726.6px;top:201.3px;width:19.5px;height:20.1px;background:#c4dc58"></div>
<div class="abs" style="left:726.6px;top:221.3px;width:19.5px;height:20.1px;background:#70c8a0"></div>
<div class="abs" style="left:726.6px;top:241.3px;width:19.5px;height:20.1px;background:#40c0b8"></div>
<div class="abs" style="left:726.6px;top:261.3px;width:19.5px;height:20.1px;background:#48b4e4"></div>
<div class="abs" style="left:726.6px;top:281.3px;width:19.5px;height:20.1px;background:#8c84c0"></div>
<div class="abs" style="left:726.6px;top:301.3px;width:19.5px;height:20.1px;background:#a488c4"></div>
<div class="t" style="left:750.30px;top:102.51px;font-size:17.00px;color:#35312c;letter-spacing:0.058px;">[dBm]</div>
<div class="t" style="left:750.60px;top:130.71px;font-size:17.00px;color:#2c2c2c;letter-spacing:0.075px;">-30</div>
<div class="t" style="left:750.60px;top:150.86px;font-size:17.00px;color:#2c2c2c;letter-spacing:0.075px;">-35</div>
<div class="t" style="left:750.60px;top:171.01px;font-size:17.00px;color:#2c2c2c;letter-spacing:0.075px;">-40</div>
<div class="t" style="left:750.60px;top:191.16px;font-size:17.00px;color:#2c2c2c;letter-spacing:0.075px;">-45</div>
<div class="t" style="left:750.60px;top:211.31px;font-size:17.00px;color:#2c2c2c;letter-spacing:0.075px;">-50</div>
<div class="t" style="left:750.60px;top:231.46px;font-size:17.00px;color:#2c2c2c;letter-spacing:0.075px;">-55</div>
<div class="t" style="left:750.60px;top:251.61px;font-size:17.00px;color:#2c2c2c;letter-spacing:0.075px;">-60</div>
<div class="t" style="left:750.60px;top:271.76px;font-size:17.00px;color:#2c2c2c;letter-spacing:0.075px;">-65</div>
<div class="t" style="left:750.60px;top:291.91px;font-size:17.00px;color:#2c2c2c;letter-spacing:0.075px;">-75</div>
<div class="abs" style="left:4.8px;top:615.9px;width:773px;height:72.9px;border:2.3px solid #a9103d;background:#f2e5e7"></div>
<div class="t" style="left:14.60px;top:634.59px;font-size:13.60px;color:#b5b1b1;letter-spacing:-0.299px;">Drawing Mode:</div>
<div class="abs" style="left:105.9px;top:623.8px;width:120.8px;height:29.6px;border:1.2px solid #b9b1b1;box-sizing:border-box;border-radius:2px"></div>
<div class="t" style="left:117.00px;top:632.96px;font-size:13.40px;color:#b5b1b1;letter-spacing:-0.655px;">Power</div>
<svg class="abs" style="left:213.7px;top:636.2px" width="5.7" height="5.0" viewBox="0 0 5.7 5.0"><path d="M0 0H5.7L2.9 5.0Z" fill="#aaa5a5"/></svg>
<div class="cb" style="left:243.6px;top:632.6px;border-color:#8a8888"><svg width="10" height="10" viewBox="0 0 10 10"><path d="M1.8 5.2l2.1 2.3 4-5.2" fill="none" stroke="#222" stroke-width="1.9"/></svg></div>
<div class="t" style="left:260.10px;top:633.63px;font-size:13.20px;color:#2d2b2b;letter-spacing:-0.616px;">Grid</div>
<div class="cb" style="left:300.6px;top:632.3px;border-color:#8a8888"><svg width="10" height="10" viewBox="0 0 10 10"><path d="M1.8 5.2l2.1 2.3 4-5.2" fill="none" stroke="#222" stroke-width="1.9"/></svg></div>
<div class="t" style="left:317.80px;top:633.63px;font-size:13.20px;color:#2d2b2b;letter-spacing:-0.638px;">Legend</div>
<div class="cb" style="left:375.9px;top:632.3px;border-color:#8a8888"><svg width="10" height="10" viewBox="0 0 10 10"><path d="M1.8 5.2l2.1 2.3 4-5.2" fill="none" stroke="#222" stroke-width="1.9"/></svg></div>
<div class="t" style="left:393.10px;top:633.63px;font-size:13.20px;color:#2d2b2b;letter-spacing:-0.449px;">Details</div>
<div class="cb" style="left:448.2px;top:632.3px;border-color:#c4c0c0"><svg width="10" height="10" viewBox="0 0 10 10"><path d="M1.8 5.2l2.1 2.3 4-5.2" fill="none" stroke="#aaa" stroke-width="1.9"/></svg></div>
<div class="t" style="left:464.90px;top:633.63px;font-size:13.20px;color:#b9b4b4;letter-spacing:-0.317px;">Healthiness Icon</div>
<div class="cb" style="left:574.7px;top:632.2px;border-color:#a9a2a2;background:linear-gradient(#e6e0e0,#cfc8c8)"></div>
<div class="t" style="left:591.90px;top:633.63px;font-size:13.20px;color:#2d2b2b;letter-spacing:-0.265px;">Floor Area</div>
<div class="cb" style="left:665.8px;top:632.2px;border-color:#a9a2a2;background:linear-gradient(#e6e0e0,#cfc8c8)"></div>
<div class="t" style="left:683.00px;top:633.63px;font-size:13.20px;color:#2d2b2b;letter-spacing:-0.388px;">Device Counter</div>
<div class="t" style="left:14.60px;top:673.66px;font-size:13.40px;color:#b5b1b1;letter-spacing:-0.327px;">Power Limit: -75 dBm</div>
<svg class="abs" style="left:140px;top:672px" width="125" height="19" viewBox="140 672 125 19"><path d="M141.2 681H261.3" stroke="#a9a1a1" stroke-width="1.8" fill="none"/><path d="M145.2 675.6V686.2M258.2 675.6V686.2" stroke="#a9a1a1" stroke-width="1.3" fill="none"/><rect x="165.3" y="674.2" width="7.2" height="15" rx="2.6" fill="#faf6f6" stroke="#9a9292" stroke-width="1"/></svg>
<div class="t" style="left:278.70px;top:673.66px;font-size:13.40px;color:#2d2b2b;letter-spacing:-0.346px;">Background Opacity: 30 %</div>
<svg class="abs" style="left:431px;top:672px" width="126" height="19" viewBox="431 672 126 19"><path d="M440 680.8H554.1" stroke="#5f5367" stroke-width="1.8" fill="none"/><rect x="434.1" y="674.2" width="7.2" height="15" rx="2.6" fill="#faf6f6" stroke="#77707c" stroke-width="1"/></svg>
<div class="abs" style="left:787px;top:616px;width:36.8px;height:57px;border:2px solid #5c58b4;background:#e6e6f0"></div>
<div class="abs" style="left:794.8px;top:621.4px;width:25.4px;height:27.1px;border:1px solid #d3d3dc;background:#e0e0ea;box-sizing:border-box"></div>
<div class="abs" style="left:794.8px;top:649.7px;width:25.4px;height:24px;border:1px solid #d3d3dc;background:#e0e0ea;box-sizing:border-box"></div>
<svg class="abs" style="left:794px;top:621px" width="27" height="53" viewBox="794 621 27 53"><path d="M801.4 634.6H813.7M807.55 628.5V640.7M801.4 661.3H813.7" stroke="#151515" stroke-width="1.4" fill="none"/></svg>
<svg class="abs" style="left:0;top:0" width="1232" height="711" viewBox="0 0 1232 711"><path d="M7.1 12.6H1227.1V62.2H713.7V592.7H7.1Z" fill="none" stroke="#3bb54a" stroke-width="2"/></svg>
<svg class="abs" style="left:363.0px;top:6.8px" width="63.0" height="26.1" viewBox="0 0 63.0 26.1" font-family="Liberation Sans, sans-serif" font-weight="bold" fill="#fff"><rect width="63.0" height="26.1" rx="3.4" fill="#04a654"/><text x="4.0" y="16.8" font-size="8.8" textLength="38.0" lengthAdjust="spacingAndGlyphs">SECTION</text><path d="M56.80 3.40V22.10H51.90V9.80C50.60 11.00 49.10 11.80 47.90 12.20V8.00C50.20 7.20 52.20 5.40 52.90 3.40Z"/></svg>
<svg class="abs" style="left:1003.0px;top:85.9px" width="63.0" height="26.1" viewBox="0 0 63.0 26.1" font-family="Liberation Sans, sans-serif" font-weight="bold" fill="#fff"><rect width="63.0" height="26.1" rx="3.4" fill="#e58c1c"/><text x="4.0" y="16.6" font-size="8.8" textLength="38.0" lengthAdjust="spacingAndGlyphs">SECTION</text><text x="53.1" y="22.2" font-size="26.0" text-anchor="middle">2</text></svg>
<svg class="abs" style="left:730.0px;top:74.0px" width="63.0" height="25.6" viewBox="0 0 63.0 25.6" font-family="Liberation Sans, sans-serif" font-weight="bold" fill="#fff"><rect width="63.0" height="25.6" rx="3.4" fill="#1478c0"/><text x="3.9" y="16.5" font-size="8.8" textLength="38.5" lengthAdjust="spacingAndGlyphs">SECTION</text><text x="53.3" y="22.4" font-size="26.0" text-anchor="middle">3</text></svg>
<svg class="abs" style="left:631.1px;top:674.0px" width="72.1" height="30.0" viewBox="0 0 72.1 30.0" font-family="Liberation Sans, sans-serif" font-weight="bold" fill="#fff"><rect width="72.1" height="30.0" rx="3.4" fill="#b4201a"/><text x="4.5" y="19.1" font-size="10.0" textLength="43.8" lengthAdjust="spacingAndGlyphs">SECTION</text><text x="60.8" y="25.5" font-size="29.3" text-anchor="middle">4</text></svg>
<svg class="abs" style="left:772.0px;top:675.2px" width="71.0" height="28.8" viewBox="0 0 71.0 28.8" font-family="Liberation Sans, sans-serif" font-weight="bold" fill="#fff"><rect width="71.0" height="28.8" rx="3.4" fill="#682c94"/><text x="4.8" y="18.4" font-size="10.0" textLength="43.2" lengthAdjust="spacingAndGlyphs">SECTION</text><text x="60.3" y="24.8" font-size="29.3" text-anchor="middle">5</text></svg>
</body></html>
